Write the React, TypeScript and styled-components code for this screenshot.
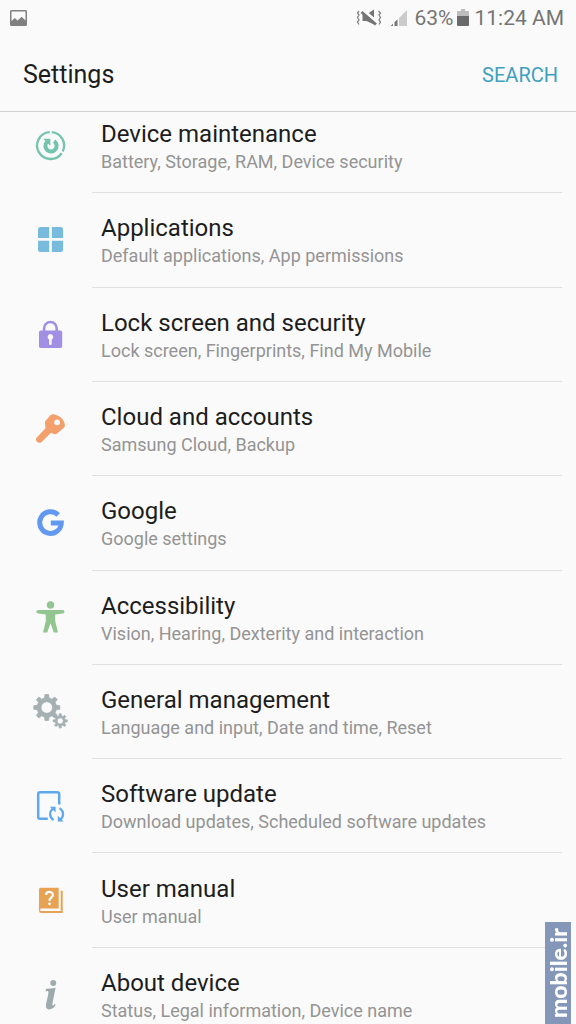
import React from "react";
import styled, { createGlobalStyle } from "styled-components";

const GlobalStyle = createGlobalStyle`
  *, *::before, *::after { box-sizing: border-box; }
  body {
    margin: 0;
    background: #fafafa;
    color: #1d1d1d;
    font-family: Roboto, "Liberation Sans", sans-serif;
  }
`;

const Screen = styled.div`
  display: flex;
  flex-direction: column;
  min-height: 100vh;
  background: #fafafa;
`;

const StatusBar = styled.div`
  display: flex;
  align-items: center;
  justify-content: space-between;
  height: 36px;
  padding: 0 12px 0 10px;
  color: #757575;
  font-size: 21px;
  line-height: 24px;
`;

const StatusGroup = styled.div`
  display: flex;
  align-items: center;
`;

const StatusText = styled.span<{ $before: number }>`
  margin-left: ${(p) => p.$before}px;
`;

const StatusIcon = styled.svg<{ $before?: number }>`
  display: block;
  margin-left: ${(p) => p.$before ?? 0}px;
`;

const TitleBar = styled.header`
  display: flex;
  align-items: center;
  justify-content: space-between;
  height: 76px;
  padding: 2px 18px 0 23px;
  border-bottom: 1px solid #cfcfcf;
  background: #fafafa;
`;

const PageTitle = styled.h1`
  margin: 0;
  font-size: 25px;
  font-weight: 400;
  line-height: 28px;
`;

const SearchButton = styled.button`
  padding: 0;
  border: 0;
  background: none;
  color: #3f9fbf;
  font-family: inherit;
  font-size: 20px;
  line-height: 28px;
  cursor: pointer;
`;

const Main = styled.main`
  display: flex;
  flex: 1;
  flex-direction: column;
  overflow: hidden;
`;

const SettingsList = styled.ul`
  display: grid;
  flex: 1;
  grid-auto-rows: 1fr;
  margin: -13px 0 -18px;
  padding: 0;
  list-style: none;
`;

const SettingsItem = styled.li`
  display: flex;
`;

const SettingsLink = styled.a`
  display: flex;
  flex: 1;
  align-items: stretch;
  padding-right: 14px;
  color: inherit;
  text-decoration: none;
`;

const IconCell = styled.span`
  display: flex;
  flex: 0 0 92px;
  align-items: center;
  padding-left: 32px;
`;

const ItemBody = styled.span`
  display: flex;
  flex: 1;
  flex-direction: column;
  justify-content: center;
  padding: 14px 0 9px 9px;
  border-bottom: 1px solid #e0e0e0;
`;

const ItemTitle = styled.span`
  font-size: 24px;
  line-height: 28px;
`;

const ItemSummary = styled.span`
  color: #949494;
  font-size: 18px;
  line-height: 28px;
`;

const Watermark = styled.div`
  position: fixed;
  right: 5px;
  bottom: 0;
  display: flex;
  align-items: center;
  justify-content: center;
  width: 26px;
  height: 102px;
  background: #8497b9;
  color: #ffffff;
  font-family: Lato, "Liberation Sans", sans-serif;
  font-size: 23px;
  font-weight: 900;
  line-height: 26px;
  writing-mode: vertical-rl;
`;

const WatermarkText = styled.span`
  transform: rotate(180deg);
`;

const Glyph = ({ children }: { children: React.ReactNode }) => (
  <svg width="36" height="36" viewBox="0 0 36 36" fill="none" aria-hidden="true">
    {children}
  </svg>
);

const polar = (cx: number, cy: number, r: number, deg: number) => {
  const a = (deg * Math.PI) / 180;
  return `${(cx + r * Math.cos(a)).toFixed(2)} ${(cy + r * Math.sin(a)).toFixed(2)}`;
};

const gearPath = (cx: number, cy: number, outer: number, root: number, hole: number) => {
  const points: string[] = [];
  for (let i = 0; i < 8; i++) {
    const c = i * 45 - 90;
    points.push(
      polar(cx, cy, root, c - 13),
      polar(cx, cy, outer, c - 8),
      polar(cx, cy, outer, c + 8),
      polar(cx, cy, root, c + 13),
    );
  }
  return `M${points.join("L")}ZM${cx - hole} ${cy}a${hole} ${hole} 0 1 0 ${2 * hole} 0a${hole} ${hole} 0 1 0 ${-2 * hole} 0Z`;
};

const MaintenanceIcon = () => (
  <Glyph>
    <g stroke="#74c3ae" strokeWidth="2.3">
      <path d={`M${polar(18.6, 17.5, 13.5, -85)}A13.5 13.5 0 0 1 ${polar(18.6, 17.5, 13.5, 26)}`} />
      <path d={`M${polar(18.6, 17.5, 13.5, 35)}A13.5 13.5 0 1 1 ${polar(18.6, 17.5, 13.5, -94)}`} />
    </g>
    <path d="M22.1 13.2A5.6 5.6 0 1 1 14.9 14" stroke="#74c3ae" strokeWidth="4" />
    <path d="M11.2 10.8h7.2v7.2Z" fill="#74c3ae" />
  </Glyph>
);

const ApplicationsIcon = () => (
  <Glyph>
    <g fill="#79bbdd">
      <path d="M8.500 5H17.200V16.100H6V7.500a2.500 2.500 0 0 1 2.500-2.500Z" />
      <path d="M19.900 5h8.700A2.500 2.500 0 0 1 31.100 7.500v8.600H19.900Z" />
      <path d="M6 18.800h11.200v11.200H8.500A2.500 2.500 0 0 1 6 27.500Z" />
      <path d="M19.900 18.800h11.200V27.500a2.500 2.500 0 0 1-2.500 2.500h-8.700Z" />
    </g>
  </Glyph>
);

const LockIcon = () => (
  <Glyph>
    <path d="M12.100 14.500v-3.200a6.300 6.300 0 0 1 12.600 0V14.500" stroke="#a18fe3" strokeWidth="2.600" />
    <rect x="7" y="13.500" width="23.200" height="17.500" rx="1.800" fill="#a18fe3" />
    <path d="M18.400 16.900a3 3 0 0 1 1.300 5.600v4.200a1.300 1.300 0 0 1-2.600 0V22.500a3 3 0 0 1 1.300-5.600Z" fill="#fafafa" />
  </Glyph>
);

const KeyIcon = () => (
  <Glyph>
    <path
      fill="#f3a06c"
      fillRule="evenodd"
      d="M18.600 4Q20.400 2.700 22.600 3.600Q28.800 5.500 31 8.800Q33.200 12.100 32.900 14.900Q32.800 16.100 31.600 16.900L25.400 22.300Q23.800 23.900 22 23.100L19 21.800L9.600 30.900Q7.600 32.700 5.200 31.100Q2.800 28.900 4.800 26.500L13.500 17.300L13 12.900Q12.600 10.900 13.600 9.700ZM25.100 8.400a2.900 2.900 0 1 0 0 5.800a2.900 2.900 0 0 0 0-5.800Z"
    />
  </Glyph>
);

const GoogleIcon = () => (
  <Glyph>
    <path d="M26.200 10A10.800 10.800 0 1 0 29.300 18H18.800" stroke="#6199f0" strokeWidth="5" />
  </Glyph>
);

const AccessibilityIcon = () => (
  <Glyph>
    <g fill="#93c590">
      <circle cx="18.500" cy="5" r="3.700" />
      <path d="M6.200 9.900H30.800a1.700 1.700 0 0 1 0 3.500L23.200 14.400V21L26 32.500H21.800L18.500 23.300L15.200 32.500H11L13.800 21V14.400L6.200 13.400a1.700 1.700 0 0 1 0-3.500Z" />
    </g>
  </Glyph>
);

const ManagementIcon = () => (
  <Glyph>
    <g fill="#a5b0b2" fillRule="evenodd" stroke="#a5b0b2" strokeWidth="0.8" strokeLinejoin="round">
      <path d={gearPath(14.8, 13.5, 13.1, 9.8, 5.8)} />
      <path d={gearPath(28.2, 26.9, 7.1, 5.1, 3.1)} />
    </g>
  </Glyph>
);

const UpdateIcon = () => (
  <Glyph>
    <g stroke="#5ea9ec" strokeWidth="2.500">
      <path d="M27.200 16.400V6a1.800 1.800 0 0 0-1.800-1.800H8A1.800 1.800 0 0 0 6.200 6v23A1.800 1.800 0 0 0 8 30.800H15.800" />
      <path d="M21.600 32C17.200 29.200 16.800 23.600 21.400 20.400" strokeWidth="2.200" />
      <path d="M27.600 20.200C32.200 23.200 32.200 29 27.800 32" strokeWidth="2.200" />
    </g>
    <path d="M17.800 18.800H23.600V24.600ZM31.600 33.600H25.800V27.800Z" fill="#5ea9ec" />
  </Glyph>
);

const ManualIcon = () => (
  <Glyph>
    <path
      fill="#e7a253"
      d="M8.600 4.800H26.700V25.400H9.400a1.300 1.300 0 0 0 0 2.600H28.700V7.800H30.700V30H9.200A2.300 2.300 0 0 1 7 27.700V6.400A1.600 1.600 0 0 1 8.600 4.800Z"
    />
    <path d="M14 12C14 7.800 20.900 7.800 20.900 11.900C20.900 14.500 17.500 14.500 17.500 18" stroke="#fafafa" strokeWidth="2.200" />
    <circle cx="17.500" cy="20.800" r="1.400" fill="#fafafa" />
  </Glyph>
);

const AboutIcon = () => (
  <Glyph>
    <g fill="#9eabae">
      <circle cx="21.200" cy="6" r="3" />
      <path d="M14.200 11.800Q19 11.800 23.600 10.800L20.500 25.900Q20 28.600 20.900 28.600Q21.800 28.400 22.800 27L23.800 27.800Q21.100 32.400 17 32.400Q13.200 32.200 14.100 27.100L16.400 16.600Q17 14.100 15.600 14.100L13.500 14.200Z" />
    </g>
  </Glyph>
);

const items = [
  { id: "device-maintenance", title: "Device maintenance", summary: "Battery, Storage, RAM, Device security", Icon: MaintenanceIcon },
  { id: "applications", title: "Applications", summary: "Default applications, App permissions", Icon: ApplicationsIcon },
  { id: "lock-screen", title: "Lock screen and security", summary: "Lock screen, Fingerprints, Find My Mobile", Icon: LockIcon },
  { id: "cloud", title: "Cloud and accounts", summary: "Samsung Cloud, Backup", Icon: KeyIcon },
  { id: "google", title: "Google", summary: "Google settings", Icon: GoogleIcon },
  { id: "accessibility", title: "Accessibility", summary: "Vision, Hearing, Dexterity and interaction", Icon: AccessibilityIcon },
  { id: "general", title: "General management", summary: "Language and input, Date and time, Reset", Icon: ManagementIcon },
  { id: "software-update", title: "Software update", summary: "Download updates, Scheduled software updates", Icon: UpdateIcon },
  { id: "user-manual", title: "User manual", summary: "User manual", Icon: ManualIcon },
  { id: "about", title: "About device", summary: "Status, Legal information, Device name", Icon: AboutIcon },
];

export default function App() {
  return (
    <Screen>
      <GlobalStyle />
      <StatusBar>
        <StatusIcon width="17" height="16" viewBox="0 0 17 16" aria-hidden="true">
          <path
            fill="#808080"
            fillRule="evenodd"
            d="M1.500 0H15.500A1.500 1.500 0 0 1 17 1.500V14.500A1.500 1.500 0 0 1 15.500 16H1.500A1.500 1.500 0 0 1 0 14.500V1.500A1.500 1.500 0 0 1 1.500 0ZM1.500 1.500V11L4.800 8L7.600 10.400L11.700 6.800L15.500 10.600V1.500Z"
          />
        </StatusIcon>
        <StatusGroup>
          <StatusIcon width="26" height="18" viewBox="0 0 26 18" fill="none" aria-hidden="true">
            <path d="M6.500 5.500H10.500L18 0.500V15.500L10.500 12H6.500Z" fill="#757575" />
            <path d="M7 1L22 14" stroke="#fafafa" strokeWidth="3" />
            <path d="M5.500 3L20 15.500" stroke="#757575" strokeWidth="2.800" />
            <path
              d="M3 2L1.500 4L3 6L1.500 8.500L3 11L1.500 13L3 15.500M22.500 2L24.500 4L23 6L24.500 8.500L23 11L24.500 13L23 15.500"
              stroke="#858585"
              strokeWidth="1.300"
            />
          </StatusIcon>
          <StatusIcon $before={8} width="18" height="18" viewBox="0 0 18 18" aria-hidden="true">
            <path d="M17 1V17H9V9Z" fill="#cbcbcb" />
            <path d="M7.500 10.300V17H4.500V13.300ZM3 14.700V17H0.700Z" fill="#757575" />
          </StatusIcon>
          <StatusText $before={6}>63%</StatusText>
          <StatusIcon $before={4} width="12" height="18" viewBox="0 0 12 18" aria-hidden="true">
            <path d="M4 0H8V2H11A1 1 0 0 1 12 3V8H0V3A1 1 0 0 1 1 2H4Z" fill="#bdbdbd" />
            <path d="M0 7H12V16A1 1 0 0 1 11 17H1A1 1 0 0 1 0 16Z" fill="#6a6a6a" />
          </StatusIcon>
          <StatusText $before={5}>11:24 AM</StatusText>
        </StatusGroup>
      </StatusBar>
      <TitleBar>
        <PageTitle>Settings</PageTitle>
        <SearchButton type="button">SEARCH</SearchButton>
      </TitleBar>
      <Main>
        <SettingsList>
          {items.map(({ id, title, summary, Icon }) => (
            <SettingsItem key={id}>
              <SettingsLink href={`#${id}`}>
                <IconCell>
                  <Icon />
                </IconCell>
                <ItemBody>
                  <ItemTitle>{title}</ItemTitle>
                  <ItemSummary>{summary}</ItemSummary>
                </ItemBody>
              </SettingsLink>
            </SettingsItem>
          ))}
        </SettingsList>
      </Main>
      <Watermark>
        <WatermarkText>mobile.ir</WatermarkText>
      </Watermark>
    </Screen>
  );
}
